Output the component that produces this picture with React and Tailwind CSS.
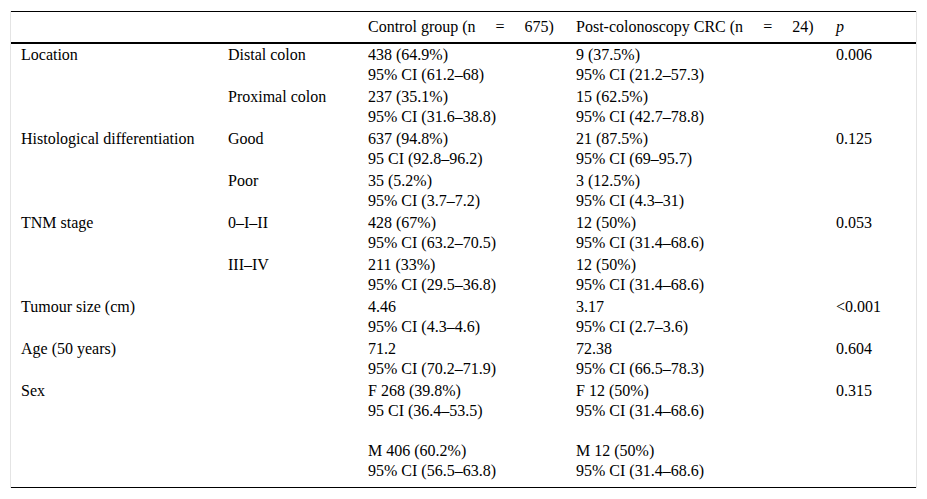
const rows = [
  { label: "Location", sub: "Distal colon", a: ["438 (64.9%)", "95% CI (61.2–68)"], b: ["9 (37.5%)", "95% CI (21.2–57.3)"], p: "0.006" },
  { label: "", sub: "Proximal colon", a: ["237 (35.1%)", "95% CI (31.6–38.8)"], b: ["15 (62.5%)", "95% CI (42.7–78.8)"], p: "" },
  { label: "Histological differentiation", sub: "Good", a: ["637 (94.8%)", "95 CI (92.8–96.2)"], b: ["21 (87.5%)", "95% CI (69–95.7)"], p: "0.125" },
  { label: "", sub: "Poor", a: ["35 (5.2%)", "95% CI (3.7–7.2)"], b: ["3 (12.5%)", "95% CI (4.3–31)"], p: "" },
  { label: "TNM stage", sub: "0–I–II", a: ["428 (67%)", "95% CI (63.2–70.5)"], b: ["12 (50%)", "95% CI (31.4–68.6)"], p: "0.053" },
  { label: "", sub: "III–IV", a: ["211 (33%)", "95% CI (29.5–36.8)"], b: ["12 (50%)", "95% CI (31.4–68.6)"], p: "" },
  { label: "Tumour size (cm)", sub: "", a: ["4.46", "95% CI (4.3–4.6)"], b: ["3.17", "95% CI (2.7–3.6)"], p: "<0.001" },
  { label: "Age (50 years)", sub: "", a: ["71.2", "95% CI (70.2–71.9)"], b: ["72.38", "95% CI (66.5–78.3)"], p: "0.604" },
];

function Lines({ items }) {
  return items.map((t, i) => (
    <div key={i} className="h-[20px] whitespace-nowrap">{t}</div>
  ));
}

export default function App() {
  const cell = "pl-[10px] pr-2 pt-px pb-px align-top";
  return (
    <div className="min-h-[499px] bg-white pt-[11px] px-[10px] text-[16px] leading-[20px] text-black" style={{ fontFamily: '"Liberation Serif", "Times New Roman", serif' }}>
      <div className="border-x border-[#e4e4e4]">
        <table className="w-full table-fixed border-collapse">
          <colgroup>
            <col className="w-[207px]" />
            <col className="w-[140px]" />
            <col className="w-[208px]" />
            <col className="w-[260px]" />
            <col />
          </colgroup>
          <thead>
            <tr className="border-t border-b-2 border-black">
              <th className="pl-[10px] py-[5px] font-normal text-left"></th>
              <th className="pl-[10px] py-[5px] font-normal text-left"></th>
              <th className="pl-[10px] py-[5px] font-normal text-left whitespace-nowrap">
                Control group (n<span className="mx-[20px]">=</span>675)
              </th>
              <th className="pl-[10px] py-[5px] font-normal text-left whitespace-nowrap">
                Post-colonoscopy CRC (n<span className="mx-[20px]">=</span>24)
              </th>
              <th className="pl-[10px] py-[5px] font-normal text-left italic">p</th>
            </tr>
          </thead>
          <tbody>
            {rows.map((r, i) => (
              <tr key={i}>
                <td className={cell + " whitespace-nowrap"}>{r.label}</td>
                <td className={cell + " whitespace-nowrap"}>{r.sub}</td>
                <td className={cell}><Lines items={r.a} /></td>
                <td className={cell}><Lines items={r.b} /></td>
                <td className={cell}>{r.p}</td>
              </tr>
            ))}
            <tr className="border-b border-black">
              <td className="pl-[10px] pt-px pb-[6px] align-top">Sex</td>
              <td className="pl-[10px] pt-px pb-[6px] align-top"></td>
              <td className="pl-[10px] pt-px pb-[6px] align-top">
                <Lines items={["F 268 (39.8%)", "95 CI (36.4–53.5)", "", "M 406 (60.2%)", "95% CI (56.5–63.8)"]} />
              </td>
              <td className="pl-[10px] pt-px pb-[6px] align-top">
                <Lines items={["F 12 (50%)", "95% CI (31.4–68.6)", "", "M 12 (50%)", "95% CI (31.4–68.6)"]} />
              </td>
              <td className="pl-[10px] pt-px pb-[6px] align-top">0.315</td>
            </tr>
          </tbody>
        </table>
      </div>
    </div>
  );
}
